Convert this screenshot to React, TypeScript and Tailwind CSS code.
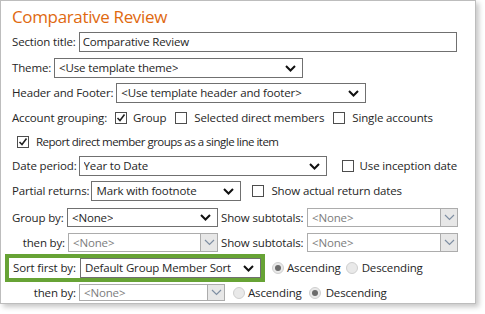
import React from "react";

function Chevron({ muted }: { muted?: boolean }) {
  return (
    <svg width="11" height="7" viewBox="0 0 11 7" className="shrink-0">
      <path
        d="M1 1 L5.5 5.5 L10 1"
        fill="none"
        stroke={muted ? "#7f8fa3" : "#111"}
        strokeWidth={muted ? 1.2 : 2}
      />
    </svg>
  );
}

function Select({
  value,
  width,
  disabled,
  height = "h-[20px]",
}: {
  value: string;
  width: string;
  disabled?: boolean;
  height?: string;
}) {
  if (disabled) {
    return (
      <div className={`${width} ${height} flex items-stretch border border-[#acacac] bg-white`}>
        <span className="flex-1 pl-[4px] flex items-center text-[#7c7c7c] truncate">{value}</span>
        <span className="w-[17px] flex items-center justify-center bg-[#e7e7e7] border-l border-[#acacac]">
          <Chevron muted />
        </span>
      </div>
    );
  }
  return (
    <div className={`${width} ${height} flex items-center justify-between border border-[#707070] bg-white pl-[4px] pr-[6px]`}>
      <span className="truncate">{value}</span>
      <Chevron />
    </div>
  );
}

function Check({ checked }: { checked?: boolean }) {
  return (
    <span className="w-[12px] h-[12px] border border-[#4d4d4d] bg-white flex items-center justify-center shrink-0">
      {checked && (
        <svg width="10" height="10" viewBox="0 0 10 10">
          <path d="M1.5 5 L4 7.5 L8.5 1.5" fill="none" stroke="#222" strokeWidth="1.6" />
        </svg>
      )}
    </span>
  );
}

function Radio({ checked }: { checked?: boolean }) {
  return (
    <span className="w-[12px] h-[12px] rounded-full border border-[#cfcfcf] bg-[#e9e9e9] flex items-center justify-center shrink-0">
      {checked && <span className="w-[6px] h-[6px] rounded-full bg-[#6b6b6b]" />}
    </span>
  );
}

export default function App() {
  return (
    <div className="w-[485px] h-[314px] bg-white font-['Open_Sans','Noto_Sans',sans-serif] text-[11.5px] tracking-[-0.15px] text-[#262626]">
      <div className="w-[476px] h-[304px] border border-[#bdbdbd] shadow-[3px_3px_5px_rgba(0,0,0,0.22)] pl-[11px]">
        <div className="h-[31px] pt-[3px] text-[17px] leading-[26px] tracking-[-0.35px] text-[#e0690f]">Comparative Review</div>

        {/* Section title */}
        <div className="h-[20px] flex items-center gap-[3px]">
          <span>Section title:</span>
          <div className="w-[378px] h-[20px] border border-[#707070] pl-[3px] flex items-center">Comparative Review</div>
        </div>

        <div className="mt-[6px] h-[20px] flex items-center gap-[3px]">
          <span>Theme:</span>
          <Select value="<Use template theme>" width="w-[249px]" />
        </div>

        <div className="mt-[5px] h-[20px] flex items-center gap-[3px]">
          <span>Header and Footer:</span>
          <Select value="<Use template header and footer>" width="w-[250px]" />
        </div>

        <div className="mt-[5px] h-[20px] flex items-center">
          <span className="mr-[8px]">Account grouping:</span>
          <Check checked />
          <span className="ml-[6px] mr-[9px]">Group</span>
          <Check />
          <span className="ml-[7px] mr-[9px]">Selected direct members</span>
          <Check />
          <span className="ml-[7px]">Single accounts</span>
        </div>

        <div className="mt-[4px] h-[20px] flex items-center pl-[5px]">
          <Check checked />
          <span className="ml-[7px] tracking-[-0.5px]">Report direct member groups as a single line item</span>
        </div>

        <div className="mt-[4px] h-[20px] flex items-center">
          <span className="mr-[2px]">Date period:</span>
          <Select value="Year to Date" width="w-[248px]" />
          <span className="ml-[15px]">
            <Check />
          </span>
          <span className="ml-[6px]">Use inception date</span>
        </div>

        <div className="mt-[5px] h-[20px] flex items-center">
          <span className="mr-[2px]">Partial returns:</span>
          <Select value="Mark with footnote" width="w-[150px]" />
          <span className="ml-[11px]">
            <Check />
          </span>
          <span className="ml-[7px]">Show actual return dates</span>
        </div>

        <div className="mt-[7px] h-[19px] flex items-center">
          <span className="w-[55px]">Group by:</span>
          <Select value="<None>" width="w-[151px]" height="h-[19px]" />
          <span className="ml-[3px] w-[86px]">Show subtotals:</span>
          <Select value="<None>" width="w-[151px]" height="h-[19px]" disabled />
        </div>

        <div className="mt-[6px] h-[19px] flex items-center">
          <span className="w-[56px] text-right pr-[3px]">then by:</span>
          <Select value="<None>" width="w-[150px]" height="h-[19px]" disabled />
          <span className="ml-[3px] w-[86px]">Show subtotals:</span>
          <Select value="<None>" width="w-[151px]" height="h-[19px]" disabled />
        </div>

        <div className="mt-[2px] flex items-center -ml-[7px]">
          <div className="w-[260px] h-[28px] border-[4px] border-[#67a335] flex items-center pl-[4px]">
            <span className="w-[67px]">Sort first by:</span>
            <Select value="Default Group Member Sort" width="w-[181px]" />
          </div>
          <span className="ml-[7px]">
            <Radio checked />
          </span>
          <span className="ml-[3px]">Ascending</span>
          <span className="ml-[5px]">
            <Radio />
          </span>
          <span className="ml-[4px]">Descending</span>
        </div>

        <div className="mt-[2px] h-[17px] flex items-center">
          <span className="w-[67px] text-right pr-[3px]">then by:</span>
          <Select value="<None>" width="w-[146px]" height="h-[17px]" disabled />
          <span className="ml-[8px]">
            <Radio />
          </span>
          <span className="ml-[3px]">Ascending</span>
          <span className="ml-[7px]">
            <Radio checked />
          </span>
          <span className="ml-[5px]">Descending</span>
        </div>
      </div>
    </div>
  );
}
